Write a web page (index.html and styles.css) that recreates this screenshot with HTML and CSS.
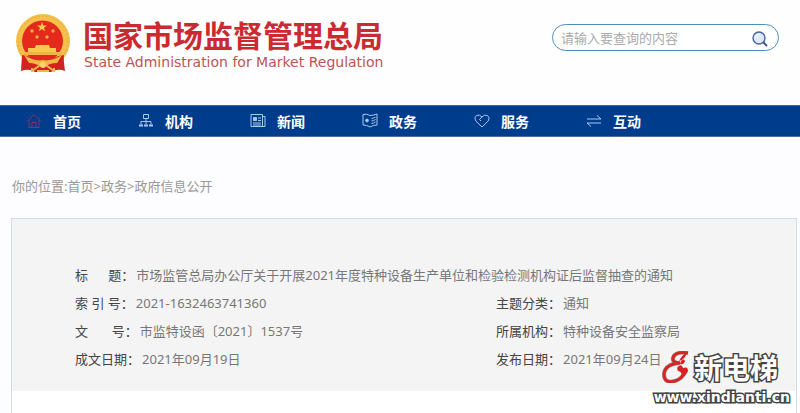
FILE: index.html
```html
<!DOCTYPE html>
<html lang="zh-CN">
<head>
<meta charset="utf-8">
<meta name="viewport" content="width=device-width, initial-scale=1">
<title>国家市场监督管理总局</title>
<link rel="stylesheet" href="styles.css">
</head>
<body>
<header class="header">
  <div class="brand">
    <svg class="emblem" viewBox="0 0 56 60" aria-hidden="true">
      <path d="M7 41L6 57Q14 54 20 58H36Q43 54 50 57L48 41Z" fill="#cf2028"/>
      <circle cx="28" cy="27" r="27" fill="#f3c04c"/>
      <circle cx="28" cy="27" r="25" fill="none" stroke="#e9ad3c" stroke-width="1" stroke-dasharray="2 2"/>
      <circle cx="27.500" cy="27" r="20.500" fill="#e52a1d"/>
      <path d="M27 8l1.200 3.500h3.800l-3 2.200 1.200 3.600-3.200-2.200-3.200 2.200 1.200-3.600-3-2.200h3.800z" fill="#f8cf55"/>
      <g fill="#eeb047"><circle cx="17" cy="17" r="1.700"/><circle cx="38" cy="17" r="1.700"/><circle cx="22" cy="23" r="1.700"/><circle cx="32" cy="23" r="1.700"/></g>
      <path d="M21 31h13l1 3h6v4H13v-4h7z" fill="#f6c950"/>
      <path d="M9 38h38v3H9z" fill="#efb742"/>
      <path d="M7 41Q18 42 24 49L28 46L32 49Q38 42 49 41L48 56Q40 52 34 54H22Q14 52 7 56Z" fill="#d3231f"/>
      <path d="M9 41Q20 48 28 46Q36 48 47 41L42 49Q34 49 28 54Q21 49 14 49Z" fill="#f1b846"/>
      <path d="M28 49L17 57M28 49L39 57M17 54v4M39 54v4M22 57h12" fill="none" stroke="#f0b947" stroke-width="2"/>
      <circle cx="28" cy="51" r="3" fill="#f8d66c"/>
    </svg>
    <div>
      <h1 class="brand-name">国家市场监督管理总局</h1>
      <p class="brand-en">State Administration for Market Regulation</p>
    </div>
  </div>
  <form class="search" role="search">
    <input class="search-input" type="search" aria-label="查询内容" placeholder="请输入要查询的内容">
    <button class="search-button" type="button" aria-label="搜索">
      <svg viewBox="0 0 16 16"><circle cx="7" cy="7" r="6" fill="#dfe9f8" stroke="#4664a8" stroke-width="1.400"/><path d="M3.500 7A3.500 3.500 0 0 1 7 3.500" stroke="#fff" fill="none"/><path d="M11 11l4 4" stroke="#3c4f8c" stroke-width="1.800"/></svg>
    </button>
  </form>
</header>

<nav class="nav" aria-label="主导航">
  <a class="nav-item" href="#"><svg class="icon icon-home" viewBox="0 0 16 16"><path d="M1 8.500L8 1.500l7 7M3 7v7.500h10V7M6 14V9.500h4V14"/></svg>首页</a>
  <a class="nav-item" href="#"><svg class="icon" viewBox="0 0 16 16"><path d="M5.500 1.500h5v4h-5zM8 5.500v6M3 11.500v-3h10v3"/><path d="M1 12.500h4M6 12.500h4M11 12.500h4" stroke-width="2"/></svg>机构</a>
  <a class="nav-item" href="#"><svg class="icon" viewBox="0 0 16 16"><path d="M1 1.500h11.500v12H1zM12.500 3.500H15v10h-3M8 5h3M8 7.500h3M3 10h8M3 12h8"/><path d="M3.500 4.500h3v3h-3z" fill="currentColor"/></svg>新闻</a>
  <a class="nav-item" href="#"><svg class="icon" viewBox="0 0 16 16"><path d="M1 1.500Q5 .500 8 2.500Q11 2.500 15 1V12Q11 12 8 14Q5 12 1 12ZM9.500 5.500q2 0 4-1.500M9.500 8q2 0 4-1.500M9.500 10.500q2 0 4-1.500"/><circle cx="5" cy="7.500" r="1.400" fill="currentColor"/></svg>政务</a>
  <a class="nav-item" href="#"><svg class="icon" viewBox="0 0 16 16"><path d="M8 14L1.800 8Q-.500 4.500 2.500 2.500Q5.500 1 8 4Q10.500 1 13.500 2.500Q16.500 4.500 14.200 8ZM8 4L5.500 6.500L7 8"/></svg>服务</a>
  <a class="nav-item" href="#"><svg class="icon" viewBox="0 0 16 16"><path d="M1 6h14L11 2.500M15 10H1l4 3.500"/></svg>互动</a>
</nav>

<main class="main">
  <div class="breadcrumb">你的位置:<a href="#">首页</a>&gt;<a href="#">政务</a>&gt;<a href="#">政府信息公开</a></div>
  <article class="document">
    <dl class="meta">
      <div class="field wide"><dt>标&nbsp;&nbsp;&nbsp;&nbsp;&nbsp;&nbsp;题：</dt><dd>市场监管总局办公厅关于开展2021年度特种设备生产单位和检验检测机构证后监督抽查的通知</dd></div>
      <div class="field"><dt>索&nbsp;引&nbsp;号：</dt><dd>2021-1632463741360</dd></div>
      <div class="field"><dt>主题分类：</dt><dd>通知</dd></div>
      <div class="field"><dt>文&nbsp;&nbsp;&nbsp;&nbsp;&nbsp;&nbsp;&nbsp;号：</dt><dd>市监特设函〔2021〕1537号</dd></div>
      <div class="field"><dt>所属机构：</dt><dd>特种设备安全监察局</dd></div>
      <div class="field"><dt>成文日期：</dt><dd>2021年09月19日</dd></div>
      <div class="field"><dt>发布日期：</dt><dd>2021年09月24日</dd></div>
    </dl>
  </article>
</main>

<aside class="watermark">
  <div class="watermark-top">
    <svg class="watermark-logo" viewBox="0 0 28 32" aria-hidden="true">
      <path d="M26 2Q13 0 11 7Q10 12 18 12Q3 13 2 23Q2 33 13 30Q20 28 23 21" fill="none" stroke="#999" stroke-width="4"/>
      <path d="M26 2Q13 0 11 7Q10 12 18 12Q3 13 2 23Q2 33 13 30Q20 28 23 21" fill="none" stroke="#d52525" stroke-width="3"/>
      <path d="M25 1Q23 9 17 10Q20 4 25 1M17 15Q20 13 21 17Q26 15 26 20Q24 25 19 26Q21 21 16 20Q14 16 17 15M19 10q3-3 4 0q-1 4-5 3z" fill="#dc1f20"/>
    </svg>
    <strong class="watermark-name">新电梯</strong>
  </div>
  <span class="watermark-url">www.xindianti.cn</span>
</aside>
</body>
</html>
```
FILE: styles.css
```css
* {
  box-sizing: border-box;
}

body {
  margin: 0;
  min-height: 100vh;
  display: flex;
  flex-direction: column;
  position: relative;
  overflow-x: hidden;
  background: #fdfcfe;
  color: #444;
  font: 13px/28px "Noto Sans", "Noto Sans CJK SC", sans-serif;
}

a {
  color: inherit;
  text-decoration: none;
}

.header {
  display: flex;
  justify-content: space-between;
  align-items: flex-start;
  padding: 14px 21px 0 15px;
  height: 105px;
  background: #fefefe;
}

.brand {
  display: flex;
  gap: 12px;
}

.emblem {
  width: 56px;
  height: 60px;
}

.brand-name {
  margin: 0;
  font: bold 30px/40px "Noto Sans CJK SC", sans-serif;
  color: #cb2b30;
}

.brand-en {
  margin: 0;
  padding-left: 1px;
  font: 14px/16px "DejaVu Sans", sans-serif;
  color: #bd5355;
}

.search {
  display: flex;
  align-items: center;
  width: 227px;
  height: 27px;
  margin-top: 10px;
  padding: 0 10px 0 8px;
  border: 1px solid #4b8fbd;
  border-radius: 14px;
  background: #fff;
}

.search-input {
  flex: 1;
  min-width: 0;
  padding: 0;
  border: 0;
  outline: 0;
  background: none;
  font: 13px/20px "Noto Sans CJK SC", sans-serif;
}

.search-input::placeholder {
  color: #aaa;
}

.search-button {
  display: flex;
  padding: 2px 0 0;
  border: 0;
  background: none;
}

.search-button svg {
  width: 16px;
  height: 16px;
}

.nav {
  display: flex;
  height: 32px;
  padding-left: 26px;
  border-top: 1px solid #2b6ba8;
  border-bottom: 1px solid #4a6f9c;
  background: #003c8c;
}

.nav-item {
  display: flex;
  align-items: center;
  gap: 11px;
  width: 112px;
  color: #fff;
  font: bold 14px/28px "Noto Sans CJK SC", sans-serif;
}

.icon {
  width: 16px;
  height: 16px;
  fill: none;
  stroke: currentColor;
  color: #a9c8ee;
}

.icon-home {
  color: #843564;
}

.main {
  flex: 1;
  display: flex;
  flex-direction: column;
  padding: 35px 3px 0 11px;
}

.breadcrumb {
  padding-left: 1px;
  color: #999;
}

.document {
  flex: 1;
  margin-top: 18px;
  border: 1px solid #d4dae6;
  border-bottom: 0;
  background: #fff;
}

.meta {
  display: grid;
  grid-template-columns: 421fr 300fr;
  margin: 0;
  padding: 42px 0 18px 63px;
  background: #f4f4f4;
}

.field {
  display: flex;
  white-space: nowrap;
}

.wide {
  grid-column: 1 / -1;
}

.field dd {
  margin: 0 0 0 2px;
  color: #777;
}

.watermark {
  position: absolute;
  right: 10px;
  bottom: 7px;
  display: flex;
  flex-direction: column;
  align-items: flex-end;
  color: #fff;
  paint-order: stroke fill;
  -webkit-text-stroke: 3px #444;
}

.watermark-top {
  display: flex;
  align-items: center;
  gap: 4px;
  padding-right: 12px;
}

.watermark-logo {
  width: 28px;
  height: 32px;
}

.watermark-name {
  font: bold 28px/42px "Noto Sans CJK SC", sans-serif;
}

.watermark-url {
  font: bold 14px/18px "DejaVu Sans", sans-serif;
}
```
